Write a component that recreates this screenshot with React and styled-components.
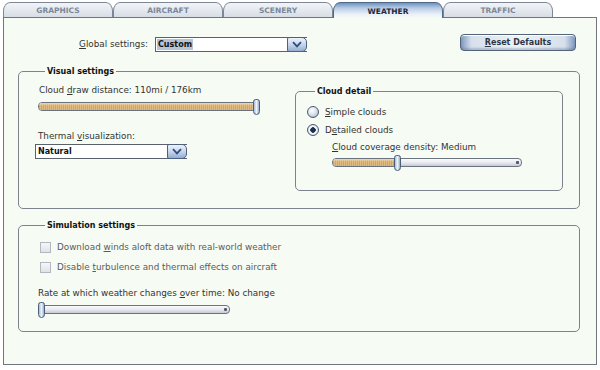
import React from "react";
import styled, { createGlobalStyle } from "styled-components";

const TABS = ["GRAPHICS", "AIRCRAFT", "SCENERY", "WEATHER", "TRAFFIC"];
const ACTIVE_TAB = "WEATHER";

const GlobalStyle = createGlobalStyle`
  html, body {
    margin: 0;
    padding: 0;
    background: #ffffff;
  }
  body {
    font-family: "DejaVu Sans", Verdana, sans-serif;
    font-size: 8.8px;
    color: #333;
  }
`;

const Screen = styled.div`
  width: 600px;
  height: 370px;
  overflow: hidden;
  background: #ffffff;
`;

const TabBar = styled.div`
  display: flex;
  padding: 2px 0 0 3px;
  height: 15px;
`;

const Tab = styled.div`
  position: relative;
  z-index: ${(p) => (p.$active ? 1 : 0)};
  box-sizing: border-box;
  width: 110px;
  height: ${(p) => (p.$active ? "16px" : "15px")};
  border: 1px solid ${(p) => (p.$active ? "#4f6888" : "#7d8694")};
  border-bottom: none;
  border-radius: 7px 7px 0 0 / 9px 9px 0 0;
  background: ${(p) =>
    p.$active
      ? "linear-gradient(180deg, #6f93bf 0%, #b9cde5 35%, #eaf1f8 75%, #f6fbf3 100%)"
      : "linear-gradient(180deg, #f1f4f7 0%, #e2e7ed 60%, #d7dde5 100%)"};
  display: flex;
  align-items: center;
  justify-content: center;
  font-family: "DejaVu Sans", Verdana, sans-serif;
  font-weight: bold;
  font-size: 7.5px;
  color: ${(p) => (p.$active ? "#1c2a3d" : "#7b8799")};
  padding-top: 1px;
`;

const Panel = styled.div`
  box-sizing: border-box;
  margin-left: 3px;
  width: 594px;
  height: 348px;
  border: 1px solid #70767f;
  background: #f6fbf3;
  padding: 16px 16px 0 14px;
`;

const TopRow = styled.div`
  display: flex;
  align-items: flex-start;
`;

const FieldLabel = styled.div`
  width: 130px;
  text-align: right;
  margin: 3px 7px 0 0;
  line-height: 15px;
  white-space: nowrap;
`;

const Spacer = styled.div`
  flex: 1;
`;

const ResetButton = styled.div`
  box-sizing: border-box;
  width: 116px;
  height: 17px;
  margin-right: 4px;
  border: 1px solid #55637a;
  border-radius: 4px;
  background: linear-gradient(
      90deg,
      #7f9ac0 0%,
      #d6dfeb 9%,
      #eef2f6 50%,
      #d6dfeb 91%,
      #7f9ac0 100%
    ),
    #e8edf3;
  box-shadow: inset 0 1px 0 #ffffff, inset 0 -2px 2px rgba(90, 110, 140, 0.35);
  display: flex;
  align-items: center;
  justify-content: center;
  font-weight: bold;
  font-size: 8px;
  color: #2c3646;
`;

const Mn = styled.u`
  text-decoration-thickness: 1px;
  text-underline-offset: 1px;
`;

const Select = styled.div`
  box-sizing: border-box;
  display: flex;
  width: 152px;
  height: 15px;
  margin-top: ${(p) => p.$mt ?? 0}px;
  margin-left: ${(p) => p.$ml ?? 0}px;
  border: 1px solid #5a616c;
  border-right: none;
  background: #ffffff;
`;

const SelectValue = styled.div`
  flex: 1;
  display: flex;
  align-items: center;
  padding-left: 1px;
`;

const SelectText = styled.span`
  font-weight: bold;
  font-size: 8px;
  color: #111;
  line-height: 11px;
  padding: 0 1px;
  background: ${(p) => (p.$highlight ? "#b4c4da" : "transparent")};
`;

const SelectArrow = styled.div`
  box-sizing: border-box;
  width: 20px;
  height: 15px;
  margin-top: -1px;
  border: 1px solid #4b6285;
  border-radius: 2px 5px 5px 2px;
  background: linear-gradient(180deg, #eef3fa 0%, #c3d3e8 55%, #94add0 100%);
  display: flex;
  align-items: center;
  justify-content: center;
`;

const Group = styled.fieldset`
  box-sizing: border-box;
  margin: ${(p) => p.$mt ?? 0}px 0 0 0;
  min-width: 0;
  width: ${(p) => p.$width}px;
  border: 1px solid #7d838d;
  border-radius: 5px;
  padding: ${(p) => p.$pad};
`;

const GroupTitle = styled.legend`
  margin-left: ${(p) => p.$ml ?? 7}px;
  padding: 0 2px;
  line-height: 11px;
  font-weight: bold;
  font-size: 8px;
  color: #111;
`;

const Columns = styled.div`
  display: flex;
  align-items: flex-start;
`;

const LeftColumn = styled.div`
  width: 257px;
  display: flex;
  flex-direction: column;
  align-items: flex-start;
`;

const Label = styled.div`
  line-height: 11px;
  white-space: nowrap;
  margin-top: ${(p) => p.$mt ?? 0}px;
  margin-left: ${(p) => p.$ml ?? 0}px;
  color: ${(p) => (p.$disabled ? "#5c5c5c" : "#333")};
`;

const OptionRow = styled.div`
  display: flex;
  align-items: center;
  gap: 6px;
  height: ${(p) => p.$h}px;
  margin-left: ${(p) => p.$ml ?? 0}px;
`;

const RadioDot = styled.span`
  box-sizing: border-box;
  width: 12px;
  height: 12px;
  border-radius: 50%;
  border: 1px solid #4a5a70;
  background: ${(p) =>
    p.$checked
      ? "radial-gradient(circle, #1b3150 0 2.5px, #ffffff 3px, #e2e8ef 4.5px, #9fb0c4 100%)"
      : "radial-gradient(circle at 40% 35%, #ffffff 0, #dde4ec 45%, #95a7bd 100%)"};
`;

const CheckBox = styled.span`
  box-sizing: border-box;
  width: 11px;
  height: 11px;
  border: 1px solid #b3b8c0;
  background: linear-gradient(180deg, #f5f6f8 0%, #dfe2e7 100%);
`;

const SliderWrap = styled.div`
  position: relative;
  box-sizing: border-box;
  width: ${(p) => p.$width}px;
  height: 16px;
  padding-top: 3px;
  margin-top: ${(p) => p.$mt ?? 0}px;
  margin-left: ${(p) => p.$ml ?? 0}px;
`;

const Track = styled.div`
  position: relative;
  box-sizing: border-box;
  height: 9px;
  border: 1px solid #6b737e;
  border-radius: 4px;
  background: linear-gradient(180deg, #fbfbfc 0%, #e6e9ed 55%, #c5cad1 100%);
  overflow: hidden;

  &::after {
    content: "";
    position: absolute;
    right: 2px;
    top: 2px;
    width: 3px;
    height: 3px;
    border-radius: 1px;
    background: #4f5a68;
  }
`;

const Fill = styled.div`
  height: 100%;
  background: linear-gradient(180deg, rgba(255, 245, 225, 0.6) 0%, rgba(255, 255, 255, 0) 40%),
    repeating-linear-gradient(90deg, #cfa565 0 1px, #dfbb82 1px 2px);
`;

const Thumb = styled.div`
  position: absolute;
  top: 0;
  box-sizing: border-box;
  width: 7px;
  height: 16px;
  border: 1px solid #4c5e78;
  border-radius: 3px 3px 4px 4px;
  background: linear-gradient(90deg, #a7bcd7 0%, #eef3f9 50%, #96adcb 100%);
`;

const Chevron = () => (
  <svg width="10" height="7" viewBox="0 0 10 7">
    <path d="M1 1.2 L5 5.4 L9 1.2" fill="none" stroke="#2d4f82" strokeWidth="1.8" />
  </svg>
);

const Dropdown = ({ value, highlight, mt, ml }) => (
  <Select $mt={mt} $ml={ml}>
    <SelectValue>
      <SelectText $highlight={highlight}>{value}</SelectText>
    </SelectValue>
    <SelectArrow>
      <Chevron />
    </SelectArrow>
  </Select>
);

const Slider = ({ width, value, mt, ml }) => {
  const thumbLeft = Math.round(value * (width - 7));
  return (
    <SliderWrap $width={width} $mt={mt} $ml={ml}>
      <Track>
        <Fill style={{ width: thumbLeft + 3 }} />
      </Track>
      <Thumb style={{ left: thumbLeft }} />
    </SliderWrap>
  );
};

const App = () => {
  return (
    <Screen>
      <GlobalStyle />
      <TabBar>
        {TABS.map((t) => (
          <Tab key={t} $active={t === ACTIVE_TAB}>
            {t}
          </Tab>
        ))}
      </TabBar>
      <Panel>
        <TopRow>
          <FieldLabel>
            <Mn>G</Mn>lobal settings:
          </FieldLabel>
          <Dropdown value="Custom" highlight mt={3} />
          <Spacer />
          <ResetButton>
            <span>
              <Mn>R</Mn>eset Defaults
            </span>
          </ResetButton>
        </TopRow>

        <Group $width={562} $mt={14} $pad="8px 16px 17px 19px">
          <GroupTitle>Visual settings</GroupTitle>
          <Columns>
            <LeftColumn>
              <Label $ml={1}>
                Cloud <Mn>d</Mn>raw distance: 110mi / 176km
              </Label>
              <Slider width={222} value={1} mt={3} />
              <Label $mt={16}>
                Thermal <Mn>v</Mn>isualization:
              </Label>
              <Dropdown value="Natural" mt={2} ml={-3} />
            </LeftColumn>
            <Group $width={268} $mt={1} $pad="6px 10px 19px 11px">
              <GroupTitle $ml={8}>Cloud detail</GroupTitle>
              <OptionRow $h={18}>
                <RadioDot />
                <span>
                  <Mn>S</Mn>imple clouds
                </span>
              </OptionRow>
              <OptionRow $h={18}>
                <RadioDot $checked />
                <span>
                  D<Mn>e</Mn>tailed clouds
                </span>
              </OptionRow>
              <Label $mt={3} $ml={25}>
                <Mn>C</Mn>loud coverage density: Medium
              </Label>
              <Slider width={190} value={0.34} mt={2} ml={25} />
            </Group>
          </Columns>
        </Group>

        <Group $width={562} $mt={11} $pad="6px 16px 13px 19px">
          <GroupTitle>Simulation settings</GroupTitle>
          <OptionRow $h={20} $ml={2}>
            <CheckBox />
            <Label $disabled>
              Download <Mn>w</Mn>inds aloft data with real-world weather
            </Label>
          </OptionRow>
          <OptionRow $h={20} $ml={2}>
            <CheckBox />
            <Label $disabled>
              Disable <Mn>t</Mn>urbulence and thermal effects on aircraft
            </Label>
          </OptionRow>
          <Label $mt={11}>
            Rate at which weather changes <Mn>o</Mn>ver time: No change
          </Label>
          <Slider width={192} value={0} mt={3} />
        </Group>
      </Panel>
    </Screen>
  );
};

export default App;
